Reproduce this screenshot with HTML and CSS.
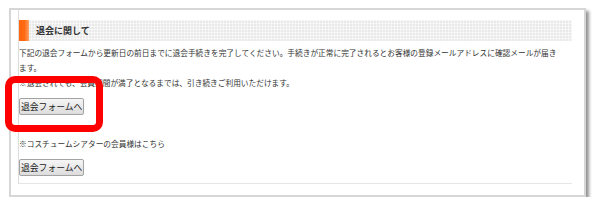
FILE: index.html
```html
<!DOCTYPE html>
<html lang="ja">
<head>
    <meta charset="UTF-8">
    <meta name="viewport" content="width=device-width, initial-scale=1.0">
    <title>退会に関して</title>
    <link rel="stylesheet" href="styles.css">
</head>
<body>
    <div class="frame">
        <div class="content">
            <h2 class="section-title"><span class="mark"></span>退会に関して</h2>
            <p class="text">
                下記の退会フォームから更新日の前日までに退会手続きを完了してください。手続きが正常に完了されるとお客様の登録メールアドレスに確認メールが届きます。<br>
                ※退会されても、会員期間が満了となるまでは、引き続きご利用いただけます。
            </p>
            <button type="button" class="btn">退会フォームへ</button>
            <p class="text note">※コスチュームシアターの会員様はこちら</p>
            <button type="button" class="btn btn-second">退会フォームへ</button>
        </div>
    </div>
    <div class="highlight"></div>
</body>
</html>
```

FILE: styles.css
```css
body {
    margin: 0;
    padding: 0;
    background-color: #fff;
    font-family: "Noto Sans CJK JP", "DejaVu Sans", sans-serif;
    color: #333;
}
.frame {
    width: 554px;
    margin: 8px 0 0 9px;
    padding: 0 12px 11px 7px;
    border: 2px solid #d6d6d6;
    box-shadow: 3px 3px 3px rgba(60, 60, 60, 0.55);
    background-color: #fff;
}
.content {
    padding: 10px 0 7px 0;
    border-left: 1px solid #dcdcdc;
    border-bottom: 1px solid #e6e6e6;
}
.section-title {
    display: flex;
    align-items: center;
    height: 21px;
    margin: 0;
    font-size: 9px;
    font-weight: bold;
    color: #333;
    background-color: #e9e9e9;
    background-image:
        linear-gradient(90deg, rgba(255, 255, 255, 0.55) 1px, transparent 1px),
        linear-gradient(rgba(255, 255, 255, 0.55) 1px, transparent 1px);
    background-size: 3px 3px;
}
.mark {
    width: 10px;
    height: 100%;
    margin-right: 7px;
    background: linear-gradient(90deg, #ff650e 0%, #ff6a12 55%, #ffa263 100%);
}
.text {
    width: 545px;
    margin: 4px 0 0 0;
    font-size: 7.7px;
    line-height: 15px;
    color: #333;
}
.note {
    margin-top: 21px;
}
.btn {
    display: block;
    height: 17px;
    margin: 8px 0 0 0;
    padding: 0 1px;
    font-family: "Noto Sans CJK JP", sans-serif;
    font-size: 8.8px;
    line-height: 15px;
    color: #222;
    border: 1px solid #a3a3a3;
    border-radius: 2px;
    background: linear-gradient(#f6f6f6, #dcdcdc);
}
.btn-second {
    margin-top: 8px;
}
/* annotation drawn over the page */
.highlight {
    position: absolute;
    left: 5px;
    top: 76px;
    width: 98px;
    height: 56px;
    box-sizing: border-box;
    border: 7px solid #f00;
    border-radius: 10px;
}
```
